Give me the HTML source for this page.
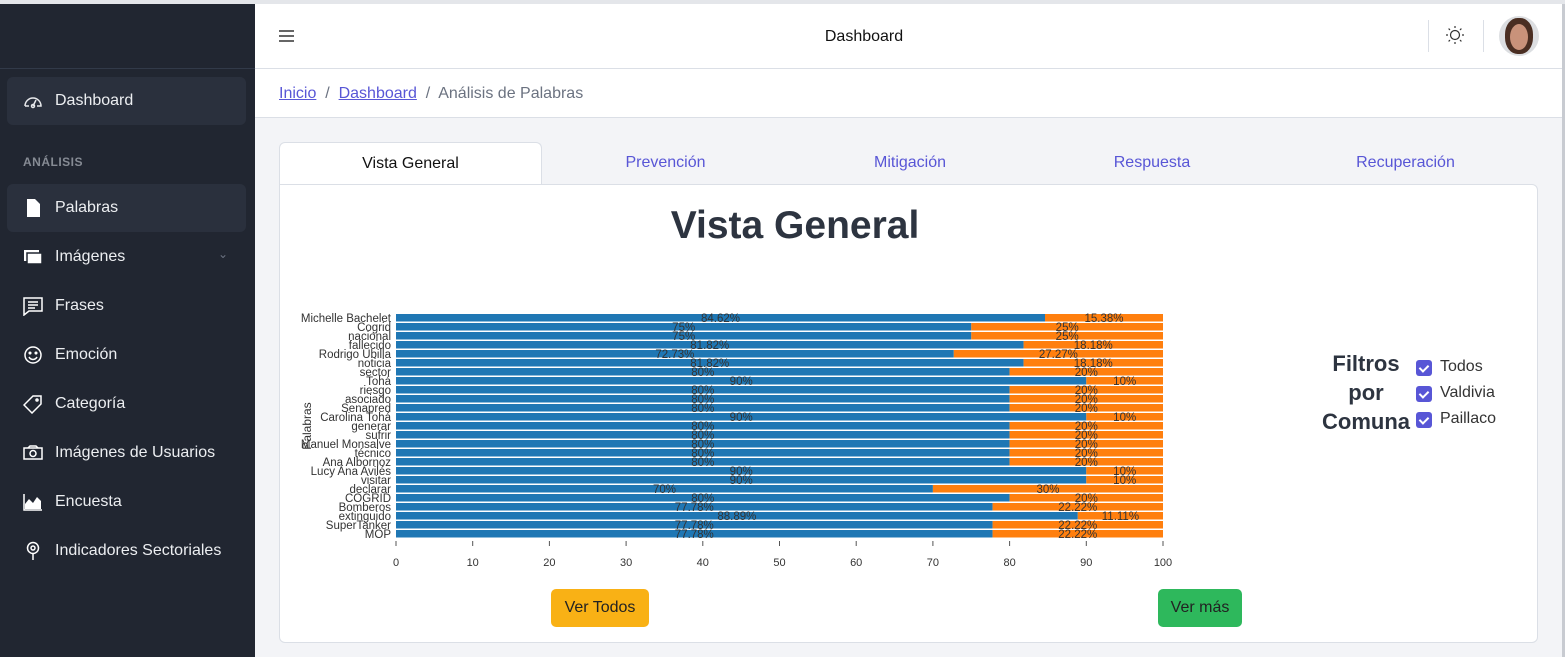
<!DOCTYPE html>
<html><head><meta charset="utf-8"><style>
*{box-sizing:border-box;margin:0;padding:0}
body{width:1565px;height:657px;overflow:hidden;font-family:"Liberation Sans",sans-serif;background:#f3f4f7;position:relative;color:#252b36}
.topline{position:absolute;left:0;top:0;width:1565px;height:4px;background:#e4e6ea}
.side{position:absolute;left:0;top:4px;width:255px;height:653px;background:#212631;color:#e8e9ec}
.side .hdr{height:65px;border-bottom:1px solid #323a49}
.item{position:absolute;left:7px;width:239px;height:48px;display:flex;align-items:center;padding-left:48px;font-size:16px;border-radius:6px;color:#eceef1}
.item.act{background:#2a303d}
.item svg{position:absolute;left:16px;top:14px}
.sec{position:absolute;left:23px;top:155px;font-size:12px;font-weight:bold;color:#868b94;letter-spacing:.5px}
.header{position:absolute;left:255px;top:4px;width:1307px;height:65px;background:#fff;border-bottom:1px solid #dbdfe6}
.bc{position:absolute;left:255px;top:69px;width:1307px;height:49px;background:#fff;border-bottom:1px solid #dbdfe6;font-size:16px;padding:16px 24px;color:#6b7280}
.bc a{color:#5856d6;text-decoration:underline}
.rstrip{position:absolute;left:1562px;top:4px;width:3px;height:653px;background:#c8cbd1}
.tab{position:absolute;top:142px;height:42px;font-size:16px;color:#5856d6;text-align:center;line-height:42px}
.tab.act{background:#fff;border:1px solid #dbdfe6;border-bottom:none;border-radius:6px 6px 0 0;color:#111}
.card{position:absolute;left:279px;top:184px;width:1259px;height:459px;background:#fff;border:1px solid #dbdfe6;border-radius:0 6px 6px 6px}
.btn{position:absolute;top:589px;height:38px;border-radius:5px;font-size:16px;line-height:38px;text-align:center;color:#222}
.cb{position:absolute;left:1416px;width:16px;height:16px;background:#5856d6;border-radius:3px}
.cb::after{content:"";position:absolute;left:5px;top:3px;width:4px;height:7px;border:solid #fff;border-width:0 2px 2px 0;transform:rotate(45deg)}
.cl{position:absolute;left:1440px;font-size:16px;color:#333}
</style></head><body>
<div class="topline"></div>
<div class="side"><div class="hdr"></div></div>
<div class="item act" style="top:77px"><svg width="20" height="20" viewBox="0 0 20 20" fill="none" stroke="#e8e9ec" stroke-width="1.5"><path d="M2 15a8 8 0 1 1 16 0H14M2 15h4"/><path d="M10 15l3-6"/><circle cx="10" cy="15" r="1.5"/></svg>Dashboard</div>
<div class="sec">ANÁLISIS</div>
<div class="item act" style="top:184px"><svg width="20" height="20" viewBox="0 0 20 20"><path d="M4 1h8l5 5v13H4z" fill="#fff"/></svg>Palabras</div>
<div class="item" style="top:233px"><svg width="20" height="20" viewBox="0 0 20 20"><rect x="1" y="3" width="15" height="11" fill="#fff"/><rect x="4" y="6" width="15" height="11" fill="#fff" stroke="#212631" stroke-width="1.5"/></svg>Imágenes<span style="position:absolute;right:18px;top:14px;color:#6b7280;font-size:12px">&#8964;</span></div>
<div class="item" style="top:282px"><svg width="20" height="20" viewBox="0 0 20 20" fill="none" stroke="#fff" stroke-width="1.5"><path d="M1 2h18v13H6l-5 4z"/><path d="M5 6h10M5 9h10M5 12h7"/></svg>Frases</div>
<div class="item" style="top:331px"><svg width="20" height="20" viewBox="0 0 20 20" fill="none" stroke="#fff" stroke-width="1.5"><circle cx="10" cy="10" r="8"/><path d="M6 12a4.5 4.5 0 0 0 8 0"/><circle cx="7" cy="8" r=".8" fill="#fff"/><circle cx="13" cy="8" r=".8" fill="#fff"/></svg>Emoción</div>
<div class="item" style="top:380px"><svg width="20" height="20" viewBox="0 0 20 20" fill="none" stroke="#fff" stroke-width="1.5"><path d="M10 2h8v8l-9 9-8-8z"/><circle cx="14" cy="6" r="1"/></svg>Categoría</div>
<div class="item" style="top:429px"><svg width="20" height="20" viewBox="0 0 20 20" fill="none" stroke="#fff" stroke-width="1.5"><rect x="1" y="5" width="18" height="11"/><circle cx="10" cy="10.5" r="3"/><path d="M5 5l2-2h6l2 2"/></svg>Imágenes de Usuarios</div>
<div class="item" style="top:478px"><svg width="20" height="20" viewBox="0 0 20 20"><path d="M1 2v16h18" fill="none" stroke="#fff" stroke-width="1.5"/><path d="M2 17V12l4-5 4 4 4-6 4 4v8z" fill="#fff"/></svg>Encuesta</div>
<div class="item" style="top:527px"><svg width="20" height="20" viewBox="0 0 20 20" fill="none" stroke="#fff" stroke-width="1.5"><circle cx="10" cy="7" r="5.5"/><circle cx="10" cy="7" r="2"/><path d="M10 12.5V19"/></svg>Indicadores Sectoriales</div>

<div class="header">
<svg style="position:absolute;left:24px;top:25px" width="16" height="14"><path d="M0 2h15M0 7h15M0 12h15" stroke="#333" stroke-width="1.4"/></svg>
<div style="position:absolute;left:0;width:1218px;text-align:center;top:24px;font-size:16px;color:#111">Dashboard</div>
<div style="position:absolute;left:1173px;top:16px;width:1px;height:32px;background:#dbdfe6"></div>
<svg style="position:absolute;left:1190px;top:21px" width="20" height="20" viewBox="0 0 20 20" fill="none" stroke="#333" stroke-width="1.2"><circle cx="10" cy="10" r="4.5"/><path d="M10 1v2M10 17v2M1 10h2M17 10h2M3.6 3.6l1.4 1.4M15 15l1.4 1.4M3.6 16.4L5 15M15 5l1.4-1.4"/></svg>
<div style="position:absolute;left:1228px;top:16px;width:1px;height:32px;background:#dbdfe6"></div>
<div style="position:absolute;left:1244px;top:12px;width:40px;height:40px;border-radius:50%;background:#dcdee1;overflow:hidden"><div style="position:absolute;left:6px;top:2px;width:28px;height:36px;border-radius:45%;background:#4a2e22"></div><div style="position:absolute;left:11px;top:8px;width:18px;height:26px;border-radius:50%;background:#c9927a"></div></div>
</div>
<div class="bc"><a>Inicio</a> &nbsp;/&nbsp; <a>Dashboard</a> &nbsp;/&nbsp; Análisis de Palabras</div>
<div class="rstrip"></div>

<div class="tab act" style="left:279px;width:263px">Vista General</div>
<div class="tab" style="left:542px;width:247px">Prevención</div>
<div class="tab" style="left:789px;width:242px">Mitigación</div>
<div class="tab" style="left:1031px;width:242px">Respuesta</div>
<div class="tab" style="left:1273px;width:265px">Recuperación</div>
<div class="card"></div>
<div style="position:absolute;left:280px;width:1030px;top:204px;text-align:center;font-size:39px;font-weight:bold;color:#2d3440">Vista General</div>

<svg style="position:absolute;left:0;top:0" width="1565" height="657" font-family="Liberation Sans, sans-serif" font-size="11.5">
<g fill="#1f77b4">
<rect x="396" y="314" width="649" height="7.5"/><rect x="396" y="323" width="575.3" height="7.5"/><rect x="396" y="332" width="575.3" height="7.5"/><rect x="396" y="341" width="627.6" height="7.5"/><rect x="396" y="350" width="557.8" height="7.5"/><rect x="396" y="359" width="627.6" height="7.5"/><rect x="396" y="368" width="613.6" height="7.5"/><rect x="396" y="377" width="690.3" height="7.5"/><rect x="396" y="386" width="613.6" height="7.5"/><rect x="396" y="395" width="613.6" height="7.5"/><rect x="396" y="404" width="613.6" height="7.5"/><rect x="396" y="413" width="690.3" height="7.5"/><rect x="396" y="422" width="613.6" height="7.5"/><rect x="396" y="431" width="613.6" height="7.5"/><rect x="396" y="440" width="613.6" height="7.5"/><rect x="396" y="449" width="613.6" height="7.5"/><rect x="396" y="458" width="613.6" height="7.5"/><rect x="396" y="467" width="690.3" height="7.5"/><rect x="396" y="476" width="690.3" height="7.5"/><rect x="396" y="485" width="536.9" height="7.5"/><rect x="396" y="494" width="613.6" height="7.5"/><rect x="396" y="503" width="596.6" height="7.5"/><rect x="396" y="512" width="681.8" height="7.5"/><rect x="396" y="521" width="596.6" height="7.5"/><rect x="396" y="530" width="596.6" height="7.5"/>
</g>
<g fill="#ff7f0e">
<rect x="1045" y="314" width="118" height="7.5"/><rect x="971.3" y="323" width="191.7" height="7.5"/><rect x="971.3" y="332" width="191.7" height="7.5"/><rect x="1023.6" y="341" width="139.4" height="7.5"/><rect x="953.8" y="350" width="209.2" height="7.5"/><rect x="1023.6" y="359" width="139.4" height="7.5"/><rect x="1009.6" y="368" width="153.4" height="7.5"/><rect x="1086.3" y="377" width="76.7" height="7.5"/><rect x="1009.6" y="386" width="153.4" height="7.5"/><rect x="1009.6" y="395" width="153.4" height="7.5"/><rect x="1009.6" y="404" width="153.4" height="7.5"/><rect x="1086.3" y="413" width="76.7" height="7.5"/><rect x="1009.6" y="422" width="153.4" height="7.5"/><rect x="1009.6" y="431" width="153.4" height="7.5"/><rect x="1009.6" y="440" width="153.4" height="7.5"/><rect x="1009.6" y="449" width="153.4" height="7.5"/><rect x="1009.6" y="458" width="153.4" height="7.5"/><rect x="1086.3" y="467" width="76.7" height="7.5"/><rect x="1086.3" y="476" width="76.7" height="7.5"/><rect x="932.9" y="485" width="230.1" height="7.5"/><rect x="1009.6" y="494" width="153.4" height="7.5"/><rect x="992.6" y="503" width="170.4" height="7.5"/><rect x="1077.8" y="512" width="85.2" height="7.5"/><rect x="992.6" y="521" width="170.4" height="7.5"/><rect x="992.6" y="530" width="170.4" height="7.5"/>
</g>
<g fill="#333" text-anchor="middle">
<text x="720.5" y="322">84.62%</text><text x="1104" y="322">15.38%</text>
<text x="683.7" y="331">75%</text><text x="1067.2" y="331">25%</text>
<text x="683.7" y="340">75%</text><text x="1067.2" y="340">25%</text>
<text x="709.8" y="349">81.82%</text><text x="1093.3" y="349">18.18%</text>
<text x="674.9" y="358">72.73%</text><text x="1058.4" y="358">27.27%</text>
<text x="709.8" y="367">81.82%</text><text x="1093.3" y="367">18.18%</text>
<text x="702.8" y="376">80%</text><text x="1086.3" y="376">20%</text>
<text x="741.2" y="385">90%</text><text x="1124.7" y="385">10%</text>
<text x="702.8" y="394">80%</text><text x="1086.3" y="394">20%</text>
<text x="702.8" y="403">80%</text><text x="1086.3" y="403">20%</text>
<text x="702.8" y="412">80%</text><text x="1086.3" y="412">20%</text>
<text x="741.2" y="421">90%</text><text x="1124.7" y="421">10%</text>
<text x="702.8" y="430">80%</text><text x="1086.3" y="430">20%</text>
<text x="702.8" y="439">80%</text><text x="1086.3" y="439">20%</text>
<text x="702.8" y="448">80%</text><text x="1086.3" y="448">20%</text>
<text x="702.8" y="457">80%</text><text x="1086.3" y="457">20%</text>
<text x="702.8" y="466">80%</text><text x="1086.3" y="466">20%</text>
<text x="741.2" y="475">90%</text><text x="1124.7" y="475">10%</text>
<text x="741.2" y="484">90%</text><text x="1124.7" y="484">10%</text>
<text x="664.5" y="493">70%</text><text x="1048" y="493">30%</text>
<text x="702.8" y="502">80%</text><text x="1086.3" y="502">20%</text>
<text x="694.3" y="511">77.78%</text><text x="1077.8" y="511">22.22%</text>
<text x="736.9" y="520">88.89%</text><text x="1120.4" y="520">11.11%</text>
<text x="694.3" y="529">77.78%</text><text x="1077.8" y="529">22.22%</text>
<text x="694.3" y="538">77.78%</text><text x="1077.8" y="538">22.22%</text>
</g>
<g fill="#333" text-anchor="end">
<text x="391" y="322">Michelle Bachelet</text><text x="391" y="331">Cogrid</text><text x="391" y="340">nacional</text><text x="391" y="349">fallecido</text><text x="391" y="358">Rodrigo Ubilla</text><text x="391" y="367">noticia</text><text x="391" y="376">sector</text><text x="391" y="385">Tohá</text><text x="391" y="394">riesgo</text><text x="391" y="403">asociado</text><text x="391" y="412">Senapred</text><text x="391" y="421">Carolina Tohá</text><text x="391" y="430">generar</text><text x="391" y="439">sufrir</text><text x="391" y="448">Manuel Monsalve</text><text x="391" y="457">técnico</text><text x="391" y="466">Ana Albornoz</text><text x="391" y="475">Lucy Ana Avilés</text><text x="391" y="484">visitar</text><text x="391" y="493">declarar</text><text x="391" y="502">COGRID</text><text x="391" y="511">Bomberos</text><text x="391" y="520">extinguido</text><text x="391" y="529">SuperTanker</text><text x="391" y="538">MOP</text>
</g>
<text transform="translate(311,426) rotate(-90)" text-anchor="middle" fill="#333" font-size="12">Palabras</text>
<g stroke="#555" stroke-width="1"><path d="M396 541v5M472.7 541v5M549.4 541v5M626.1 541v5M702.8 541v5M779.5 541v5M856.2 541v5M932.9 541v5M1009.6 541v5M1086.3 541v5M1163 541v5"/></g>
<g fill="#333" text-anchor="middle" font-size="11"><text x="396" y="566">0</text><text x="472.7" y="566">10</text><text x="549.4" y="566">20</text><text x="626.1" y="566">30</text><text x="702.8" y="566">40</text><text x="779.5" y="566">50</text><text x="856.2" y="566">60</text><text x="932.9" y="566">70</text><text x="1009.6" y="566">80</text><text x="1086.3" y="566">90</text><text x="1163" y="566">100</text></g>
</svg>

<div style="position:absolute;left:1316px;top:349px;width:100px;text-align:center;font-size:22px;font-weight:bold;color:#2d3440;line-height:29px">Filtros<br>por<br>Comuna</div>
<div class="cb" style="top:360px"></div><div class="cl" style="top:358px">Todos</div>
<div class="cb" style="top:386px"></div><div class="cl" style="top:384px">Valdivia</div>
<div class="cb" style="top:412px"></div><div class="cl" style="top:410px">Paillaco</div>

<div class="btn" style="left:551px;width:98px;background:#f9b115">Ver Todos</div>
<div class="btn" style="left:1158px;width:84px;background:#2eb85c">Ver más</div>
</body></html>
